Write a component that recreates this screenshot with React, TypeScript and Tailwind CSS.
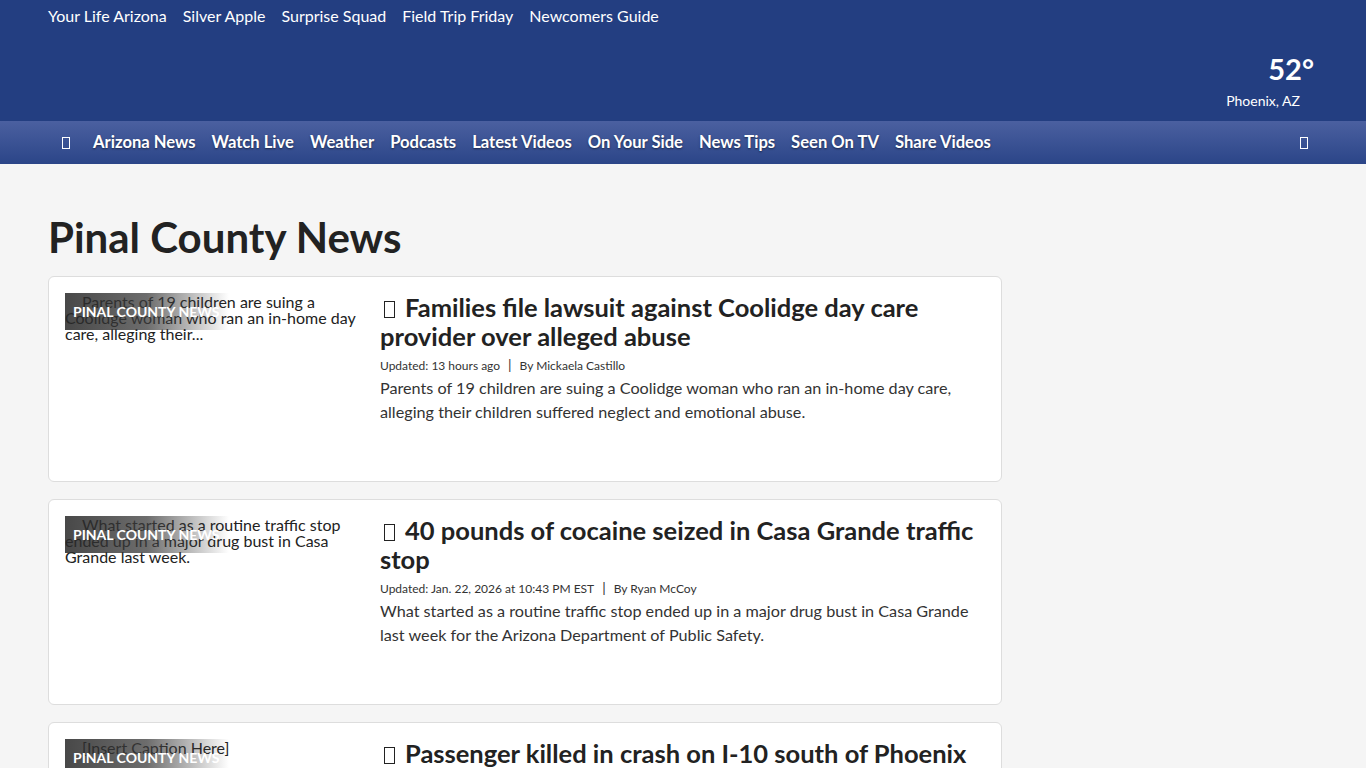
const topLinks = ['Your Life Arizona', 'Silver Apple', 'Surprise Squad', 'Field Trip Friday', 'Newcomers Guide']

const navLinks = [
  'Arizona News',
  'Watch Live',
  'Weather',
  'Podcasts',
  'Latest Videos',
  'On Your Side',
  'News Tips',
  'Seen On TV',
  'Share Videos',
]

const stories = [
  {
    alt: 'Parents of 19 children are suing a Coolidge woman who ran an in-home day care, alleging their...',
    title: 'Families file lawsuit against Coolidge day care provider over alleged abuse',
    updated: 'Updated: 13 hours ago',
    author: 'By Mickaela Castillo',
    summary:
      'Parents of 19 children are suing a Coolidge woman who ran an in-home day care, alleging their children suffered neglect and emotional abuse.',
  },
  {
    alt: 'What started as a routine traffic stop ended up in a major drug bust in Casa Grande last week.',
    title: '40 pounds of cocaine seized in Casa Grande traffic stop',
    updated: 'Updated: Jan. 22, 2026 at 10:43 PM EST',
    author: 'By Ryan McCoy',
    summary:
      'What started as a routine traffic stop ended up in a major drug bust in Casa Grande last week for the Arizona Department of Public Safety.',
  },
  {
    alt: '[Insert Caption Here]',
    title: 'Passenger killed in crash on I-10 south of Phoenix',
    updated: 'Updated: Jan. 22, 2026 at 6:12 PM EST',
    author: 'By Arizona\'s Family Digital News',
    summary: 'A passenger was killed in a crash on Interstate 10 south of Phoenix on Thursday.',
  },
]

// stands in for the icon-font glyph that failed to load
function Tofu({ className }: { className: string }) {
  return <span className={`inline-block border border-current ${className}`} />
}

export default function App() {
  return (
    <div className="min-h-screen bg-[#f5f5f5] font-['Lato','Noto_Sans',sans-serif] text-[#222]">
      <header className="bg-[#233e81] h-[121px] flex flex-col">
        <nav className="flex gap-4 px-12 pt-1 text-[16px] leading-6 text-white">
          {topLinks.map((l) => (
            <a key={l}>{l}</a>
          ))}
        </nav>
        <div className="flex flex-col items-end pr-[52px] mt-[23px] text-white">
          <span className="text-[29px] font-bold leading-9">52°</span>
          <span className="text-[14px] leading-5 mr-[14px] mt-[4px]">Phoenix, AZ</span>
        </div>
      </header>

      <div className="h-[43px] bg-gradient-to-b from-[#4b60a0] to-[#2b4588] flex items-center pl-[62px] pr-[58px] text-white">
        <Tofu className="w-[8px] h-[12px] mr-[23px]" />
        <div className="flex gap-4 text-[16.6px] font-bold [text-shadow:0_1px_2px_rgba(0,0,0,0.5)]">
          {navLinks.map((l) => (
            <a key={l}>{l}</a>
          ))}
        </div>
        <Tofu className="w-[8px] h-[12px] ml-auto" />
      </div>

      <main className="px-12 pt-[49px]">
        <h1 className="text-[42px] font-bold leading-[48px] text-[#222] mb-[15px]">Pinal County News</h1>
        <div className="w-[954px] flex flex-col gap-[17px]">
          {stories.map((s) => (
            <article
              key={s.title}
              className="bg-white border border-[#dddddd] rounded-md p-4 flex gap-4 h-[206px]"
            >
              <div className="relative w-[299px] h-[172px] shrink-0 text-[16px] leading-4 text-[#222]">
                <p className="pt-[1px] indent-[17px]">{s.alt}</p>
                <div className="absolute left-0 top-0 h-[37px] w-[164px] bg-gradient-to-r from-[rgba(40,40,40,0.85)] via-[rgba(60,60,60,0.75)] to-transparent flex items-center pl-2">
                  <span className="text-white text-[14px] font-bold uppercase whitespace-nowrap">Pinal County News</span>
                </div>
              </div>
              <div className="flex-1">
                <h2 className="text-[25.5px] font-bold leading-[29px] text-[#222]">
                  <Tofu className="w-[11px] h-[17px] ml-[4px] mr-[10px] align-[-1px] font-normal" />
                  {s.title}
                </h2>
                <p className="text-[12px] leading-4 mt-[6px] text-[#333]">
                  {s.updated}
                  <span className="mx-2 text-[14px]">|</span>
                  {s.author}
                </p>
                <p className="text-[16.2px] leading-6 mt-[2px] text-[#333]">{s.summary}</p>
              </div>
            </article>
          ))}
        </div>
      </main>
    </div>
  )
}
